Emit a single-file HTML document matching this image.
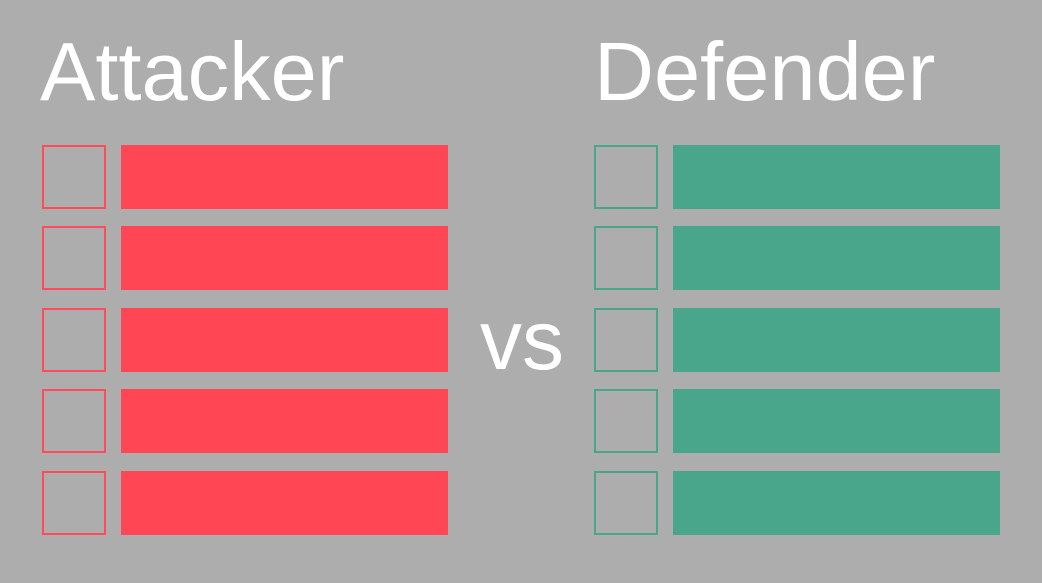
<!DOCTYPE html>
<html><head><style>
body{margin:0;width:1042px;height:583px;background:#adadad;position:relative;overflow:hidden;font-family:"Liberation Sans",Arial,sans-serif;color:#fff}
.t{position:absolute;font-size:83px;line-height:1;top:30px}
.b{position:absolute;width:60px;height:60px;border:2px solid}
.r{position:absolute;width:327px;height:64px}
</style></head><body>
<div class="t" style="left:40px">Attacker</div>
<div class="t" style="left:594px">Defender</div>
<div style="position:absolute;left:480px;top:298px;font-size:84px;line-height:1">vs</div>
<div id="c"></div>
<script>
var tops=[145,226,308,389,471],h='';
tops.forEach(function(t){
h+='<div class="b" style="left:42px;top:'+t+'px;border-color:#ff4b5a"></div>';
h+='<div class="r" style="left:121px;top:'+t+'px;background:#ff4654"></div>';
h+='<div class="b" style="left:594px;top:'+t+'px;border-color:#4aa68b"></div>';
h+='<div class="r" style="left:673px;top:'+t+'px;background:#49a68b"></div>';
});
document.getElementById('c').innerHTML=h;
</script>
</body></html>
